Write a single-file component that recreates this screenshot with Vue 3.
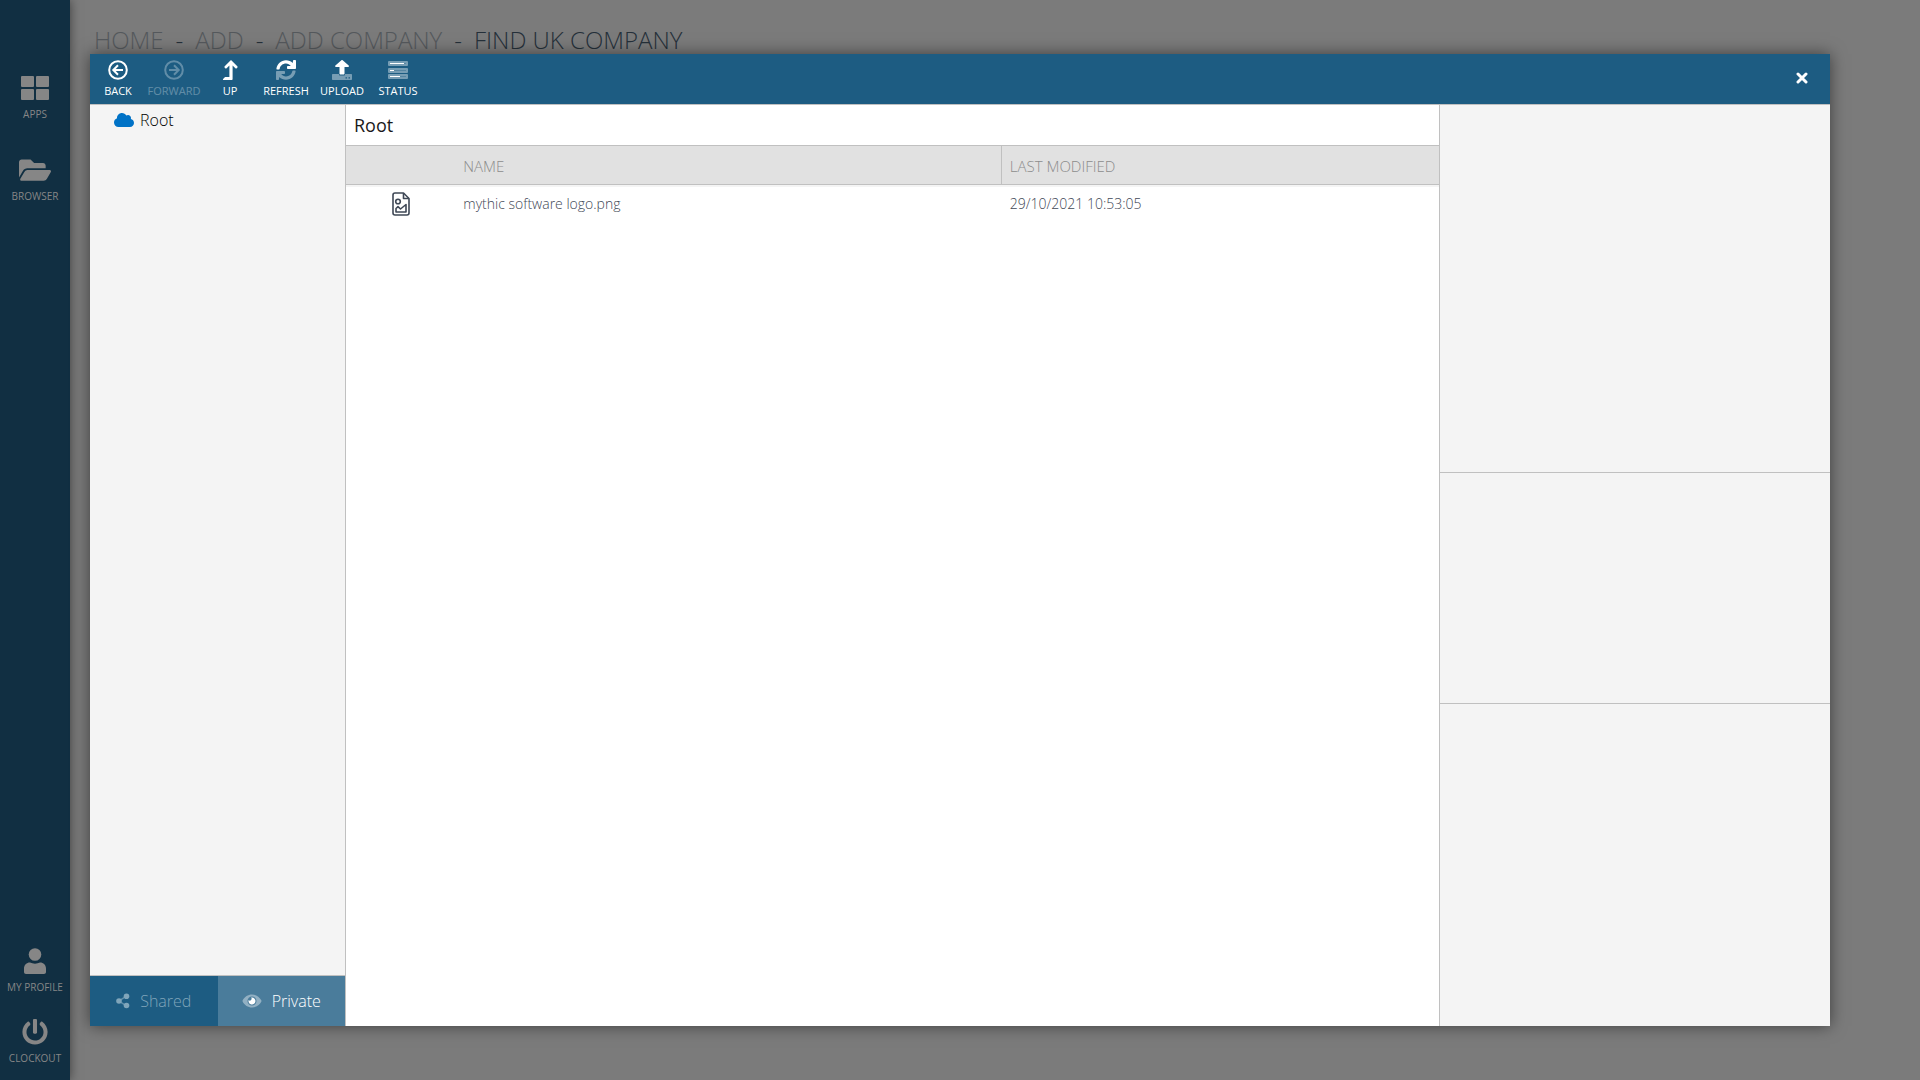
<script setup>
import { ref } from 'vue'

const crumbs = [
  { label: 'HOME' },
  { label: 'ADD' },
  { label: 'ADD COMPANY' },
  { label: 'FIND UK COMPANY', current: true },
]

const files = [{ name: 'mythic software logo.png', modified: '29/10/2021 10:53:05' }]

const scope = ref('private')
</script>

<template>
  <div class="page">
    <nav class="rail" aria-label="Main">
      <div class="rail-group">
        <a href="#apps" class="rail-link">
          <svg width="28" height="26" viewBox="0 0 28 26">
            <rect x="0" y="1" width="13" height="11" rx="1" />
            <rect x="15" y="1" width="13" height="11" rx="1" />
            <rect x="0" y="14" width="13" height="11" rx="1" />
            <rect x="15" y="14" width="13" height="11" rx="1" />
          </svg>
          <span>APPS</span>
        </a>
        <a href="#browser" class="rail-link">
          <svg width="32" height="26" viewBox="0 20 576 468">
            <path d="M572.694 292.093L500.27 416.248A63.997 63.997 0 0 1 444.989 448H45.025c-18.523 0-30.064-20.093-20.731-36.093l72.424-124.155A64 64 0 0 1 152 256h399.964c18.523 0 30.064 20.093 20.73 36.093zM152 224h328v-48c0-26.51-21.49-48-48-48H272l-64-64H48C21.49 64 0 85.49 0 112v278.046l69.077-118.418C86.214 242.25 117.989 224 152 224z" />
          </svg>
          <span>BROWSER</span>
        </a>
      </div>
      <div class="rail-group rail-bottom">
        <a href="#profile" class="rail-link">
          <svg width="22" height="26" viewBox="0 0 22 26">
            <circle cx="11" cy="6.5" r="6.3" />
            <path d="M6 14.6c1.500.7 3.200 1.100 5 1.100s3.500-.4 5-1.100c3.500 0 6 2.600 6 6V24c0 1.200-.8 2-2 2H2c-1.200 0-2-.8-2-2v-3.400c0-3.400 2.500-6 6-6z" />
          </svg>
          <span>MY PROFILE</span>
        </a>
        <a href="#clockout" class="rail-link">
          <svg width="26" height="26" viewBox="0 0 512 512">
            <path d="M400 54.1c63 45 104 118.6 104 201.9 0 136.8-110.8 247.7-247.5 248C120 504.3 8.200 393 8 256.4 7.900 173.1 48.900 99.300 111.8 54.200c11.700-8.300 28-4.800 35 7.700L162.6 90c5.900 10.500 3.100 23.800-6.600 31-41.500 30.800-68 79.600-68 134.900-.1 92.300 74.500 168.100 168 168.100 91.600 0 168.600-74.200 168-169.100-.3-51.800-24.700-101.800-68.100-134-9.700-7.200-12.400-20.500-6.500-30.900l15.800-28.100c7-12.400 23.200-16.100 34.800-7.800zM296 264V24c0-13.300-10.700-24-24-24h-32c-13.300 0-24 10.700-24 24v240c0 13.300 10.700 24 24 24h32c13.300 0 24-10.700 24-24z" />
          </svg>
          <span>CLOCKOUT</span>
        </a>
      </div>
    </nav>

    <main class="content">
      <nav class="crumbs" aria-label="Breadcrumb">
        <template v-for="(crumb, i) in crumbs" :key="crumb.label">
          <span v-if="i" class="dash">-</span>
          <a href="#" :class="{ current: crumb.current }">{{ crumb.label }}</a>
        </template>
      </nav>
    </main>

    <section class="dialog" role="dialog" aria-label="File browser">
      <header class="toolbar">
        <button type="button" class="tool">
          <svg viewBox="0 0 20 20">
            <g fill="none" stroke="currentColor" stroke-width="2">
              <circle cx="10" cy="10" r="8.800" />
              <path d="M15 10H6.200M10 5.300L5.300 10l4.700 4.700" />
            </g>
          </svg>
          <span>BACK</span>
        </button>
        <button type="button" class="tool" disabled>
          <svg viewBox="0 0 20 20">
            <g fill="none" stroke="currentColor" stroke-width="2">
              <circle cx="10" cy="10" r="8.800" />
              <path d="M5 10h8.800M10 5.300l4.700 4.700-4.700 4.700" />
            </g>
          </svg>
          <span>FORWARD</span>
        </button>
        <button type="button" class="tool">
          <svg viewBox="0 0 20 20">
            <path fill="currentColor" d="M11 0l6.300 6.200c.5.500.5 1 .1 1.400l-.6.600c-.5.500-1 .4-1.400 0L12.600 5.500V19c0 .6-.4 1-1 1H3.700c-.8 0-1-.6-.6-1l1.700-1.700c.3-.3.6-.4 1-.4h3.600V5.500L6.600 8.200c-.4.400-.9.500-1.400 0l-.6-.6c-.4-.4-.4-.9.1-1.400z" />
          </svg>
          <span>UP</span>
        </button>
        <button type="button" class="tool">
          <svg viewBox="0 0 20 20">
            <path fill="currentColor" d="M.4 8.800C1 4 5 .3 10 .3c2.600 0 5 1 6.700 2.700L17 .8c0-.5.3-.8.800-.8h1.400c.5 0 .8.300.8.800v7.400c0 .5-.3.800-.8.800h-7.400c-.5 0-.8-.3-.8-.8V6.800c0-.5.300-.8.800-.8l3 .1C13.600 4.500 12 3.600 10 3.600c-3.200 0-5.700 2.200-6.300 5.200-.1.400-.3.600-.7.600H1c-.4 0-.7-.3-.6-.6z" />
            <path fill="currentColor" opacity=".4" d="M19.600 11.200C19 16 15 19.700 10 19.700c-2.600 0-5-1-6.700-2.700L3 19.200c0 .5-.3.800-.8.800H.8c-.5 0-.8-.3-.8-.8v-7.400c0-.5.300-.8.800-.8h7.400c.5 0 .8.300.8.800v1.400c0 .5-.3.800-.8.800l-3-.1c1.200 1.600 2.800 2.500 4.800 2.500 3.200 0 5.700-2.200 6.300-5.200.1-.4.300-.6.700-.6h2c.4 0 .7.300.6.600z" />
          </svg>
          <span>REFRESH</span>
        </button>
        <button type="button" class="tool">
          <svg viewBox="0 0 20 20">
            <path fill="currentColor" opacity=".4" fill-rule="evenodd" d="M1 14h6v.5c0 .6.500 1 1 1h4c.6 0 1-.4 1-1V14h6c.6 0 1 .4 1 1v4c0 .6-.4 1-1 1H1c-.6 0-1-.4-1-1v-4c0-.6.400-1 1-1zm12.500 3.200v1.400H15v-1.400zm3 0v1.400H18v-1.400z" />
            <path fill="currentColor" d="M8.500 14.500c-.6 0-1-.4-1-1V7H4c-.8 0-1.200-.8-.6-1.400L9.400.3c.4-.4.900-.4 1.300 0l6 5.300c.5.500.1 1.400-.7 1.400h-3.500v6.500c0 .6-.4 1-1 1z" />
          </svg>
          <span>UPLOAD</span>
        </button>
        <button type="button" class="tool">
          <svg viewBox="0 0 20 20">
            <g fill="currentColor">
              <g opacity=".4">
                <rect y="1" width="20" height="5" rx="1" />
                <rect y="8" width="20" height="5" rx="1" />
                <rect y="14" width="20" height="5" rx="1" />
              </g>
              <path d="M2 3h14v1H2zM2 10h4v1H2zM2 16h10v1H2z" />
              <path opacity=".35" fill="#1d5c82" d="M16 3h2v1h-2zM6 10h12v1H6zM12 16h6v1h-6z" />
            </g>
          </svg>
          <span>STATUS</span>
        </button>
        <button type="button" class="close" aria-label="Close">
          <svg width="12" height="12" viewBox="0 0 12 12">
            <path d="M2 2l8 8M10 2l-8 8" stroke="currentColor" stroke-width="3" stroke-linecap="round" />
          </svg>
        </button>
      </header>

      <div class="body">
        <aside class="tree">
          <div class="tree-list">
            <a href="#root" class="node">
              <svg width="20" height="14" viewBox="0 32 640 448">
                <path fill="#0072c6" d="M537.6 226.6c4.100-10.700 6.400-22.400 6.400-34.600 0-53-43-96-96-96-19.700 0-38.100 6-53.300 16.200C367 64.200 315.3 32 256 32c-88.400 0-160 71.600-160 160 0 2.700.1 5.400.2 8.100C40.200 219.8 0 273.2 0 336c0 79.500 64.500 144 144 144h368c70.700 0 128-57.300 128-128 0-61.900-44-113.600-102.400-125.400z" />
              </svg>
              <span>Root</span>
            </a>
          </div>
          <div class="tabs">
            <button type="button" class="tab" :class="{ active: scope === 'shared' }" @click="scope = 'shared'">
              <svg width="14" height="16" viewBox="0 0 14 16">
                <g fill="currentColor">
                  <path opacity=".7" d="M3 7l7-4.500.8 1.200-7 4.500zM3.800 7.800l7 4.500-.8 1.200-7-4.500z" />
                  <circle cx="3" cy="8" r="2.800" />
                  <circle cx="10.500" cy="3.200" r="2.800" />
                  <circle cx="10.500" cy="12.500" r="2.800" />
                </g>
              </svg>
              <span>Shared</span>
            </button>
            <button type="button" class="tab" :class="{ active: scope === 'private' }" @click="scope = 'private'">
              <svg width="20" height="14" viewBox="0 0 20 14">
                <path fill="currentColor" opacity=".4" fill-rule="evenodd" d="M10 .5c4 0 7.500 2.400 9.300 5.800.2.500.2 1 0 1.400C17.500 11.100 14 13.500 10 13.500S2.500 11.100.7 7.700c-.2-.4-.2-.9 0-1.400C2.500 2.900 6 .5 10 .5zm0 2A4.500 4.500 0 1 0 10 11.500 4.500 4.500 0 1 0 10 2.500z" />
                <path fill="currentColor" d="M10 3.500A3.500 3.500 0 1 1 6.600 6.100 1.700 1.700 0 0 0 9.100 3.600c.3-.1.600-.1.900-.1z" />
              </svg>
              <span>Private</span>
            </button>
          </div>
        </aside>

        <section class="listing">
          <h1 class="folder">Root</h1>
          <table class="files">
            <thead>
              <tr>
                <th class="col-icon"></th>
                <th class="col-name">NAME</th>
                <th class="col-date">LAST MODIFIED</th>
              </tr>
            </thead>
            <tbody>
              <tr v-for="file in files" :key="file.name">
                <td class="file-icon">
                  <svg width="18" height="24" viewBox="0 0 18 24">
                    <g fill="none" stroke="currentColor" stroke-width="1.600" stroke-linejoin="round">
                      <path d="M11.500 1H3C1.800 1 1 1.800 1 3v18c0 1.200.8 2 2 2h12c1.200 0 2-.8 2-2V6.500z" />
                      <path d="M11.500 1v5.500H17" />
                      <circle cx="6" cy="9.500" r="2.300" />
                      <path d="M4 20v-3.500l2-1.800 2.500 2.300L14 12.500V20z" />
                    </g>
                  </svg>
                </td>
                <td>{{ file.name }}</td>
                <td>{{ file.modified }}</td>
              </tr>
            </tbody>
          </table>
        </section>

        <aside class="details">
          <div class="pane preview"></div>
          <div class="pane info"></div>
          <div class="pane history"></div>
        </aside>
      </div>
    </section>
  </div>
</template>

<style>
body {
  margin: 0;
  background: #7b7b7b;
}
</style>

<style scoped>
.page {
  display: flex;
  min-height: 100vh;
  font-family: "Open Sans", "Liberation Sans", sans-serif;
  background: #7b7b7b;
}

.page *,
.page {
  box-sizing: border-box;
}

a {
  color: inherit;
  text-decoration: none;
}

button {
  margin: 0;
  padding: 0;
  border: 0;
  background: none;
  color: inherit;
  font-family: inherit;
  cursor: pointer;
}

svg {
  display: block;
  flex: none;
}

.rail {
  display: flex;
  flex-direction: column;
  justify-content: space-between;
  width: 70px;
  padding: 75px 0 15px;
  background: #112f42;
  color: #868686;
  box-shadow: 0 0 10px rgba(0, 0, 0, 0.5);
}

.rail-group {
  display: flex;
  flex-direction: column;
  gap: 36px;
}

.rail-bottom {
  gap: 25px;
}

.rail-link {
  display: flex;
  flex-direction: column;
  align-items: center;
  gap: 6px;
  font-size: 10px;
  line-height: 14px;
  white-space: nowrap;
}

.rail-link svg {
  fill: currentColor;
}

.content {
  flex: 1;
  padding: 24px 24px 0;
}

.crumbs {
  display: flex;
  gap: 12px;
  font-size: 24px;
  line-height: 32px;
  font-weight: 300;
  color: #55595d;
}

.crumbs .current,
.dash {
  color: #25303a;
}

.dialog {
  position: absolute;
  inset: 5vh 90px;
  display: flex;
  flex-direction: column;
  background: #fff;
  box-shadow: 0 0 15px rgba(0, 0, 0, 0.5);
}

.toolbar {
  display: flex;
  height: 51px;
  flex: none;
  border-bottom: 1px solid #c0c0c0;
  background: #1d5c82;
  color: #fff;
}

.tool {
  display: flex;
  flex-direction: column;
  align-items: center;
  gap: 4px;
  width: 56px;
  padding-top: 6px;
  font-size: 11px;
  line-height: 14px;
  font-weight: 400;
}

.tool svg {
  width: 20px;
  height: 20px;
}

.tool:disabled {
  color: #fff;
  opacity: 0.3;
}

.close {
  display: flex;
  align-items: center;
  justify-content: center;
  width: 56px;
  height: 48px;
  margin-left: auto;
}

.body {
  display: flex;
  flex: 1;
}

.tree {
  display: flex;
  flex-direction: column;
  width: 256px;
  border-right: 1px solid #c0c0c0;
  background: #f4f4f4;
}

.tree-list {
  flex: 1;
  padding: 3px 24px;
}

.node {
  display: flex;
  align-items: center;
  gap: 6px;
  font-size: 16px;
  line-height: 24px;
  font-weight: 300;
  color: #000;
}

.tabs {
  display: flex;
  border-top: 1px solid #c0c0c0;
  background: #1d5c82;
}

.tab {
  display: flex;
  flex: 1;
  align-items: center;
  justify-content: center;
  gap: 10px;
  height: 50px;
  font-size: 16px;
  font-weight: 300;
  color: #80a5ba;
}

.tab.active {
  background: #4a7c9b;
  color: #fff;
}

.listing {
  flex: 1;
}

.folder {
  margin: 0;
  padding: 0 8px;
  font-size: 18px;
  line-height: 40px;
  font-weight: 400;
  color: #1a1a1a;
}

.files {
  width: 100%;
  table-layout: fixed;
  border-collapse: separate;
  border-spacing: 0;
  font-size: 14px;
  font-weight: 300;
  color: #3f4856;
}

.files th {
  height: 40px;
  padding: 2px 8px 0;
  border: solid #c0c0c0;
  border-width: 1px 0;
  background: #e1e1e1;
  color: #8c8c8c;
  font-size: 15px;
  font-weight: 300;
  text-align: left;
}

.files .col-icon {
  width: 10%;
}

.files .col-name {
  width: 50%;
  border-right-width: 1px;
}

.files td {
  height: 37px;
  padding: 0 8px;
}

.files tbody tr:first-child td {
  border-top: 2px solid #f4f4f4;
  padding-bottom: 2px;
}

.file-icon svg {
  margin: 0 auto;
}

.details {
  display: flex;
  flex-direction: column;
  width: 391px;
  border-left: 1px solid #c0c0c0;
  background: #f4f4f4;
}

.pane {
  border-bottom: 1px solid #c0c0c0;
}

.preview {
  height: 40%;
}

.info {
  height: 25%;
}

.history {
  flex: 1;
  border-bottom: 0;
}
</style>
